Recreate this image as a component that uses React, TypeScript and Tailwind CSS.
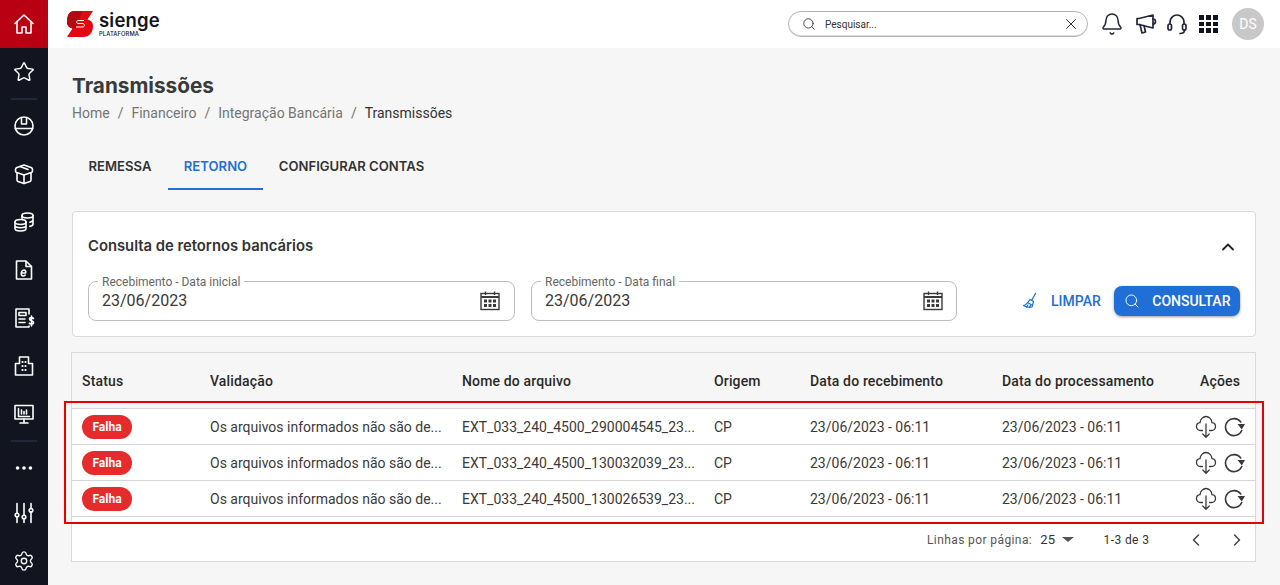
import React from "react";
import { ChevronUp, ChevronLeft, ChevronRight, Search, X, Bell, Star, Ellipsis, Settings } from "lucide-react";

function Ico({ children, size = 24, sw = 1.5, className = "" }: { children: React.ReactNode; size?: number; sw?: number; className?: string }) {
  return (
    <svg width={size} height={size} viewBox="0 0 24 24" fill="none" stroke="currentColor" strokeWidth={sw} strokeLinecap="round" strokeLinejoin="round" className={className}>
      {children}
    </svg>
  );
}

const Home = () => (
  <Ico sw={1.6}><path d="M3 11.500 12 3l9 8.500" /><path d="M5 9.500V21h5v-6h4v6h5V9.500" /></Ico>
);
const Helmet = () => (
  <Ico sw={1.6}>
    <circle cx="12" cy="12" r="9" />
    <path d="M3.300 14.500h17.400" />
    <path d="M9.500 3.500V10h5V3.500" />
  </Ico>
);
const Box = () => (
  <Ico sw={1.6}>
    <path d="M12 3l7 2.500c1 .4 1.500 1 1.500 2V9c0 .8-.4 1.300-1.200 1.600L12 13l-7.300-2.400C3.900 10.300 3.500 9.800 3.500 9V7.500c0-1 .5-1.600 1.500-2z" />
    <path d="M5 11v7c0 .8.400 1.200 1 1.500l6 2 6-2c.6-.3 1-.7 1-1.500v-7" />
    <path d="M12 13v8.500M8 4.500l8 3" />
  </Ico>
);
const Coins = () => (
  <Ico sw={1.6}>
    <ellipse cx="15.500" cy="5.500" rx="5.500" ry="2.500" />
    <path d="M10 5.500v3M21 5.500v8.500c0 1-1 2-3.200 2.400M21 9.800c0 1-1 2-3.200 2.400" />
    <ellipse cx="8.500" cy="12" rx="5.500" ry="2.500" />
    <path d="M3 12v6.500C3 19.900 5.500 21 8.500 21s5.500-1.100 5.500-2.500V12M3 15.300c0 1.400 2.500 2.500 5.500 2.500s5.500-1.100 5.500-2.500" />
  </Ico>
);
const DocE = () => (
  <svg width="24" height="24" viewBox="0 0 24 24" fill="none" stroke="currentColor" strokeWidth="1.600" strokeLinejoin="round">
    <path d="M4.500 3H14l5.500 5.500V21h-15z" /><path d="M14 3v5.500h5.500" />
    <path strokeLinecap="round" d="M10 15h3.600c.5-1.600-.3-3-1.600-3-1.700 0-2.800 2-2.800 3.800 0 1.500 1 2.200 2 2.200.8 0 1.500-.4 2-1" />
  </svg>
);
const Report = () => (
  <Ico sw={1.6}>
    <path d="M17 8V3H4v18h13v-1" /><path d="M7 6.500h7v3H7zM7 13h6M7 16.500h6" />
    <path d="M21.500 12.500c-.5-.7-1.200-1-2-1-1.200 0-2 .7-2 1.600 0 2.200 4 1.300 4 3.500 0 1-.9 1.600-2 1.600-.8 0-1.600-.4-2.100-1M19.500 10v10" />
  </Ico>
);
const Building = () => (
  <Ico sw={1.6}>
    <path d="M3.500 21V9.500h4V3h9v6.500h4V21z" />
    <path strokeWidth="2.200" d="M10.500 8h.01M13.500 8h.01M10.500 12h.01M13.500 12h.01M10.500 16h.01M13.500 16h.01" />
  </Ico>
);
const Monitor = () => (
  <Ico sw={1.6}>
    <path d="M3 3.500h18v13.500H3z" /><path d="M12 17v3.500M8 21h8" />
    <path d="M6.500 6.500v8h11M9.500 12V8M12 12V9.500M14.500 12V8" />
  </Ico>
);
const Sliders = () => (
  <Ico sw={1.6}>
    <path d="M5 2.500v9.500M5 16v5.500M12 2.500v11.500M12 18v3.500M19 2.500v5M19 11v10.500" />
    <circle cx="5" cy="14" r="1.800" /><circle cx="12" cy="16" r="1.800" /><circle cx="19" cy="9.300" r="1.800" />
  </Ico>
);
const Megaphone = () => (
  <Ico sw={1.7}>
    <path d="M3 6.500 5 6.500 19 3v13L5 12.500H3z" /><path d="M6 12.500 8 21l3.500-1-1.500-6.500" /><path d="M19 7c1.500 0 2.500 1 2.500 2.500S20.500 12 19 12" />
  </Ico>
);
const Headset = () => (
  <Ico sw={1.7}>
    <path d="M5 12v-2a7 7 0 0 1 14 0v2" /><rect x="3" y="12" width="3.500" height="6" rx="1.700" /><rect x="17.500" y="12" width="3.500" height="6" rx="1.700" />
    <path d="M19.500 18c0 2.500-1.500 3.500-4.500 3.500" />
  </Ico>
);
const Calendar = () => (
  <svg width="22" height="22" viewBox="0 0 22 22" fill="none" stroke="#3a3a3a" strokeWidth="1.400">
    <rect x="2" y="3.500" width="18" height="16" />
    <path d="M2 7h18" strokeWidth="2" /><path d="M6.500 1.500v3.500M15.500 1.500v3.500" />
    <path stroke="none" fill="#3a3a3a" d="M5 9.500h3v3H5zM9.500 9.500h3v3h-3zM14 9.500h3v3h-3zM5 14h3v3H5zM9.500 14h3v3h-3zM14 14h3v3h-3z" />
  </svg>
);
const Broom = () => (
  <svg width="18" height="18" viewBox="0 0 18 18" fill="none" stroke="#1f6fd6" strokeWidth="1.200" strokeLinejoin="round" strokeLinecap="round">
    <path d="M14.500 1.500 10.800 8" /><path d="M9 7.500l3.500 2-1.500 5.500c-2.500.6-6 .2-8.500-1.500 2-.3 4.300-2.500 6.500-6z" /><path d="M6.500 10.500l4 2.300M5.500 15l1.500-2M8.500 15.500l1-2" />
  </svg>
);
const CloudDown = () => (
  <svg width="22" height="24" viewBox="0 0 22 24" fill="none" stroke="#3a3a3a" strokeWidth="1.300" strokeLinecap="round" strokeLinejoin="round">
    <path d="M7.500 15.500h-2C3 15.500 1.500 13.500 1.500 11.500s1.500-3.700 3.500-3.900C5.200 4.500 7.800 1.500 11 1.500s5.800 3 6 6.100c2 .2 3.500 1.900 3.500 3.900s-1.500 4-4 4h-2" />
    <path d="M11 9v13.200M7.800 19 11 22.200 14.200 19" />
  </svg>
);
const Refresh = () => (
  <svg width="22" height="22" viewBox="0 0 22 22" fill="none">
    <path d="M18.800 14.500A8.500 8.500 0 1 1 17.800 6" stroke="#3a3a3a" strokeWidth="1.600" strokeLinecap="round" />
    <path d="M14.500 8h7.500L18.800 13.500z" fill="#3a3a3a" />
  </svg>
);

const Logo = () => (
  <div className="flex items-center gap-[6px]">
    <svg width="26" height="26" viewBox="0 0 26 26">
      <path d="M7 0H26L20.500 8.500C24.500 9.500 26 12 26 15 26 21 23 26 16 26H0L5.500 17.500C1.500 16.500 0 14 0 11 0 5 2 0 7 0Z" fill="#e30613" />
      <path d="M7 0H15L9 17.500H5.500C1.500 16.500 0 14 0 11 0 5 2 0 7 0Z" fill="#b30a14" />
      <path d="M17 9.500H11C9.500 9.500 9 12.500 11 12.500H16C18 13 17.500 16 16 16H9" stroke="#fff" strokeWidth="1" fill="none" />
    </svg>
    <div className="flex flex-col">
      <span className="font-['Inter',sans-serif] font-semibold text-[18.500px] leading-[17px] text-[#12141f] tracking-[0.2px]">sienge</span>
      <span className="mt-[1px] font-['Inter',sans-serif] font-medium text-[5.800px] leading-[7px] text-[#12141f] tracking-[0.1px]">PLATAFORMA</span>
    </div>
  </div>
);

const NavItem = ({ children, active }: { children: React.ReactNode; active?: boolean }) => (
  <div className={`h-12 w-12 shrink-0 flex items-center justify-center text-white ${active ? "bg-[#b80012]" : ""}`}>{children}</div>
);
const NavDivider = () => (
  <div className="flex h-[6px] shrink-0 items-center justify-center"><div className="h-[2px] w-[26px] bg-[#23273a]" /></div>
);

const rows = ["EXT_033_240_4500_290004545_23...", "EXT_033_240_4500_130032039_23...", "EXT_033_240_4500_130026539_23..."];
const cols = "grid grid-cols-[128px_252px_252px_96px_192px_178px_1fr] items-center pl-[10px]";

export default function App() {
  return (
    <div className="relative flex h-[585px] w-[1280px] overflow-hidden bg-[#f6f6f6] font-['Roboto',sans-serif]">
      <aside className="flex w-12 shrink-0 flex-col bg-[#12141f]">
        <NavItem active><Home /></NavItem>
        <NavItem><Star size={22} strokeWidth={1.6} /></NavItem>
        <NavDivider />
        <NavItem><Helmet /></NavItem>
        <NavItem><Box /></NavItem>
        <NavItem><Coins /></NavItem>
        <NavItem><DocE /></NavItem>
        <NavItem><Report /></NavItem>
        <NavItem><Building /></NavItem>
        <NavItem><Monitor /></NavItem>
        <NavDivider />
        <NavItem><Ellipsis size={22} /></NavItem>
        <div className="mb-[3px] flex h-[42px] shrink-0 items-center justify-center text-white"><Sliders /></div>
        <NavItem><Settings size={22} strokeWidth={1.5} /></NavItem>
      </aside>

      <div className="flex min-w-0 flex-1 flex-col">
        <header className="flex h-12 shrink-0 items-center bg-white pl-[19px] pr-[16px]">
          <Logo />
          <div className="ml-auto flex h-[26px] w-[300px] items-center rounded-full border border-[#b4b4b4] pl-[13px] pr-[7px] shadow-[inset_0_-1px_0_#ddd]">
            <Search size={14} strokeWidth={1.4} className="text-[#2a2a2a]" />
            <span className="ml-[9px] text-[10px] text-[#333]">Pesquisar...</span>
            <X size={18} strokeWidth={1.2} className="ml-auto text-[#1f2130]" />
          </div>
          <div className="ml-[12px] flex items-center text-[#23263a]">
            <Bell size={24} strokeWidth={1.5} />
            <div className="ml-[10px]"><Megaphone /></div>
            <div className="ml-[7px]"><Headset /></div>
            <div className="ml-[7px] grid grid-cols-3 gap-[2px] p-[3px]">
              {Array.from({ length: 9 }).map((_, i) => <div key={i} className="h-[4.500px] w-[5px] bg-[#12141f]" />)}
            </div>
          </div>
          <div className="ml-[11px] flex h-8 w-8 items-center justify-center rounded-full bg-[#c8c8c8] text-[14px] text-white">DS</div>
        </header>

        <main className="flex min-h-0 flex-1 flex-col px-6 pt-[25px]">
          <h1 className="font-['Inter',sans-serif] text-[20.750px] font-bold leading-[26px] text-[#3a3a3a]">Transmissões</h1>
          <nav className="mt-[4px] flex gap-[8px] text-[14px] leading-[20px] text-[#757575]">
            <span>Home</span><span>/</span><span>Financeiro</span><span>/</span><span>Integração Bancária</span><span>/</span><span className="text-[#333]">Transmissões</span>
          </nav>

          <div className="mt-[19px] flex h-[48px] font-['Inter',sans-serif] text-[13.100px] font-semibold">
            <div className="flex w-[96px] items-center justify-center pt-[1px] text-[#333]">REMESSA</div>
            <div className="flex w-[95px] items-center justify-center border-b-2 border-[#1f6fd6] pt-[3px] text-[#1f6fd6]">RETORNO</div>
            <div className="flex w-[177px] items-center justify-center pt-[1px] text-[#333]">CONFIGURAR CONTAS</div>
          </div>

          <section className="mt-[21px] h-[126px] w-[1184px] shrink-0 rounded-[4px] border border-[#d9d9d9] bg-white px-[15px]">
            <div className="flex h-[69px] items-center justify-between pr-[2px]">
              <h2 className="font-['Inter',sans-serif] text-[14.800px] font-semibold text-[#333]">Consulta de retornos bancários</h2>
              <ChevronUp size={20} strokeWidth={2.200} className="text-[#222]" />
            </div>
            <div className="flex items-center">
              {["Recebimento - Data inicial", "Recebimento - Data final"].map((l, i) => (
                <div key={l} className={`relative flex h-10 shrink-0 items-center justify-between rounded-[8px] border border-[#bdbdbd] pl-[13px] ${i ? "ml-[16px] w-[426px] pr-[12px]" : "w-[427px] pr-[13px]"}`}>
                  <span className="absolute -top-[6px] left-[9px] bg-white px-[4px] text-[12px] leading-[13px] text-[#666]">{l}</span>
                  <span className="text-[16px] text-[#3a3a3a]">23/06/2023</span>
                  <Calendar />
                </div>
              ))}
              <div className="ml-[64px] flex items-center gap-[12px] text-[14px] font-medium text-[#1f6fd6]">
                <Broom />
                <span>LIMPAR</span>
              </div>
              <div className="ml-[13.500px] flex h-[30px] w-[126px] shrink-0 items-center rounded-[8px] bg-[#1f6fd6] pl-[10px] text-[14px] font-medium text-white shadow-[0_1px_3px_rgba(0,0,0,0.4)]">
                <Search size={16} strokeWidth={1.400} />
                <span className="ml-[12px]">CONSULTAR</span>
              </div>
            </div>
          </section>

          <section className="mt-[15px] -ml-[1px] flex h-[210px] w-[1185px] shrink-0 flex-col border border-[#d9d9d9] bg-white">
            <div className={`${cols} h-[55px] shrink-0 bg-[#f6f6f6] pt-[2px] text-[14px] font-medium tracking-[0.15px] text-[#2a2a2a]`}>
              <span>Status</span><span>Validação</span><span>Nome do arquivo</span><span>Origem</span><span>Data do recebimento</span><span>Data do processamento</span><span className="pl-[20px]">Ações</span>
            </div>
            {rows.map((r) => (
              <div key={r} className={`${cols} h-[36px] shrink-0 border-t border-[#d6d6d6] bg-white text-[14px] text-[#3a3a3a]`}>
                <span className="flex h-6 w-[50px] items-center justify-center rounded-full bg-[#e52b2b] text-[12px] font-bold text-white">Falha</span>
                <span className="pt-[1px]">Os arquivos informados não são de...</span>
                <span className="pt-[1px]">{r}</span>
                <span className="pt-[1px]">CP</span>
                <span className="pt-[1px]">23/06/2023 - 06:11</span>
                <span className="pt-[1px]">23/06/2023 - 06:11</span>
                <span className="flex items-center gap-[6px] pl-[15px]"><CloudDown /><Refresh /></span>
              </div>
            ))}
            <div className="flex flex-1 items-center border-t border-[#d6d6d6] pl-[855px] pt-[1px] text-[12px] tracking-[0.4px] text-[#555]">
              <span>Linhas por página:</span>
              <span className="ml-[8px] text-[13px] text-[#333]">25</span>
              <span className="ml-[6px] h-0 w-0 border-x-[6px] border-t-[5px] border-x-transparent border-t-[#555]" />
              <span className="ml-[30px] text-[#333]">1-3 de 3</span>
              <ChevronLeft size={20} strokeWidth={1.800} className="ml-[37px] text-[#444]" />
              <ChevronRight size={20} strokeWidth={1.800} className="ml-[21px] text-[#444]" />
            </div>
          </section>
        </main>
      </div>

      <div className="pointer-events-none absolute left-[64px] top-[401px] h-[123px] w-[1200px] border-2 border-[#e80000]" />
    </div>
  );
}
